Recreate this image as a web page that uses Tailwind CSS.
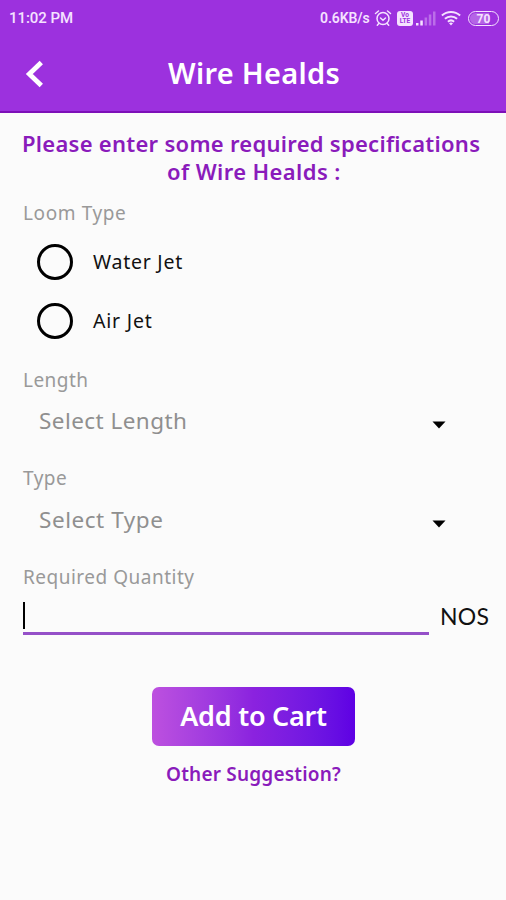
<!DOCTYPE html>
<html lang="en">
<head>
<meta charset="utf-8">
<meta name="viewport" content="width=device-width, initial-scale=1">
<title>Wire Healds</title>
<script src="https://cdn.jsdelivr.net/npm/@tailwindcss/browser@4"></script>
</head>
<body class="bg-[#fbfbfb] font-['Noto_Sans',sans-serif] whitespace-nowrap">
<div class="w-[506px] h-[900px] overflow-hidden flex flex-col">
  <header class="h-[113px] shrink-0 bg-[#9c31de] border-b-2 border-[#7d0fb8] text-white flex flex-col">
    <div class="h-9 pl-[9px] pr-[7px] flex items-center justify-between font-['Roboto',sans-serif] font-medium text-[#f5e2ff]">
      <span class="text-[15px] tracking-[-0.05px]">11:02 PM</span>
      <div class="flex items-center">
        <span class="text-[14px] font-semibold tracking-[-0.1px] w-[54px]">0.6KB/s</span>
        <svg class="w-[18px] h-[18px]" viewBox="0 0 18 18" fill="none" stroke="currentColor" stroke-width="1.5" stroke-linecap="round"><circle cx="9" cy="9.5" r="6"/><path d="M1.5 4.5 4.5 2M16.5 4.5 13.5 2M6.5 9l2.5 2.300L11.500 9M4.800 14.500l-1.500 1.700M13.200 14.500l1.500 1.700"/></svg>
        <div class="ml-[5px] w-[16px] h-[15px] rounded-[3px] bg-[#f5e2ff] text-[#9c31de] text-[6.500px] leading-[6.500px] font-bold flex flex-col items-center justify-center"><span>Vo</span><span>LTE</span></div>
        <svg class="ml-[3px] w-[20px] h-[15px]" viewBox="0 0 20 15" fill="currentColor"><path d="M0 12h2.500v2.500H0zM4.300 9.500h2.500v5H4.300z"/><path opacity=".35" d="M8.600 6.500h2.500v8H8.600zM12.800 3.500h2.500v11h-2.500zM17 .5h2.500v14H17z"/></svg>
        <svg class="ml-[5px] w-[20px] h-[16px]" viewBox="0 0 20 16" fill="none" stroke="currentColor" stroke-width="2"><path d="M.9 5.500c5.200-4.700 13-4.700 18.200 0M3.900 8.700c3.500-3.100 8.700-3.100 12.200 0M6.900 11.700c1.800-1.500 4.400-1.500 6.200 0"/><path d="M8 13.200q2-1.500 4 0l-2 2.300z" fill="currentColor" stroke="none"/></svg>
        <div class="ml-[7px] w-[31px] h-[15px] rounded-full border-[1.500px] border-[#f5e2ff] flex items-center justify-center p-px"><span class="w-full h-full rounded-full bg-linear-to-r from-white/25 from-70% to-transparent to-70% text-[12px] leading-[12px] text-center font-bold">70</span></div>
      </div>
    </div>
    <div class="h-[75px] flex items-center">
      <svg class="ml-[24px] w-[20px] h-[28px]" viewBox="0 0 20 28" fill="none" stroke="currentColor" stroke-width="4.800"><path d="M17.300 2.500 5.300 14l12 11.500"/></svg>
      <h1 class="ml-[124px] -mt-[2px] text-[29px] leading-[36px] font-semibold tracking-[0.3px]">Wire Healds</h1>
    </div>
  </header>
  <main class="flex flex-col">
    <h2 class="mt-[16px] h-14 text-[22px] leading-7 font-semibold text-[#8a1bbb]">
      <span class="block pl-[22px] tracking-[0.27px]">Please enter some required specifications</span>
      <span class="block pl-[167px] tracking-[0.4px]">of Wire Healds :</span>
    </h2>
    <div class="mt-[14px] pl-[23px] h-7 leading-7 text-[19px] tracking-[0.6px] text-[#999]">Loom Type</div>
    <div class="mt-[5px] h-[59px] pl-[37px] flex items-center"><span class="size-[36px] rounded-full border-[3px] border-black"></span><span class="ml-5 text-[19.500px] tracking-[0.75px] text-[#111]">Water Jet</span></div>
    <div class="h-[59px] pl-[37px] flex items-center"><span class="size-[36px] rounded-full border-[3px] border-black"></span><span class="ml-5 text-[19.500px] tracking-[0.8px] text-[#111]">Air Jet</span></div>
    <div class="mt-[16px] pl-[23px] h-7 leading-7 text-[19px] tracking-[0.45px] text-[#999]">Length</div>
    <div class="mt-[11px] h-8 pl-[39px] pr-[60px] flex items-center justify-between text-[22.500px] text-[#8f8f8f]"><span class="tracking-[0.45px]">Select Length</span><svg class="mt-[7px] w-[14px] h-[8px]" viewBox="0 0 14 8"><path d="M.5 .5h13L7 7.500z"/></svg></div>
    <div class="mt-[27px] pl-[23px] h-7 leading-7 text-[19px] tracking-[0.5px] text-[#999]">Type</div>
    <div class="mt-[12px] h-8 pl-[39px] pr-[60px] flex items-center justify-between text-[22.500px] text-[#8f8f8f]"><span class="tracking-[0.55px]">Select Type</span><svg class="mt-[7px] w-[14px] h-[8px]" viewBox="0 0 14 8"><path d="M.5 .5h13L7 7.500z"/></svg></div>
    <div class="mt-[27px] pl-[23px] h-7 leading-7 text-[19px] tracking-[0.5px] text-[#999]">Required Quantity</div>
    <div class="mt-[11px] pl-[23px] flex">
      <div class="w-[406px] h-[33px] border-b-[3px] border-[#9550c8]"><div class="w-[2px] h-[27px] bg-black"></div></div>
      <span class="ml-[11px] text-[23px] leading-[28px] tracking-[0.3px] font-['Lato','Noto_Sans',sans-serif] text-[#111]">NOS</span>
    </div>
    <button class="mt-[52px] ml-[152px] w-[203px] h-[59px] rounded-[7px] bg-linear-to-r from-[#bd50df] via-[#8b22df] to-[#5e00e4] text-white text-[27px] font-semibold tracking-[-0.25px]">Add to Cart</button>
    <a class="mt-[14px] pl-[166px] h-7 leading-7 text-[19px] font-semibold tracking-[0.2px] text-[#8a1bbb]">Other Suggestion?</a>
  </main>
</div>
</body>
</html>
